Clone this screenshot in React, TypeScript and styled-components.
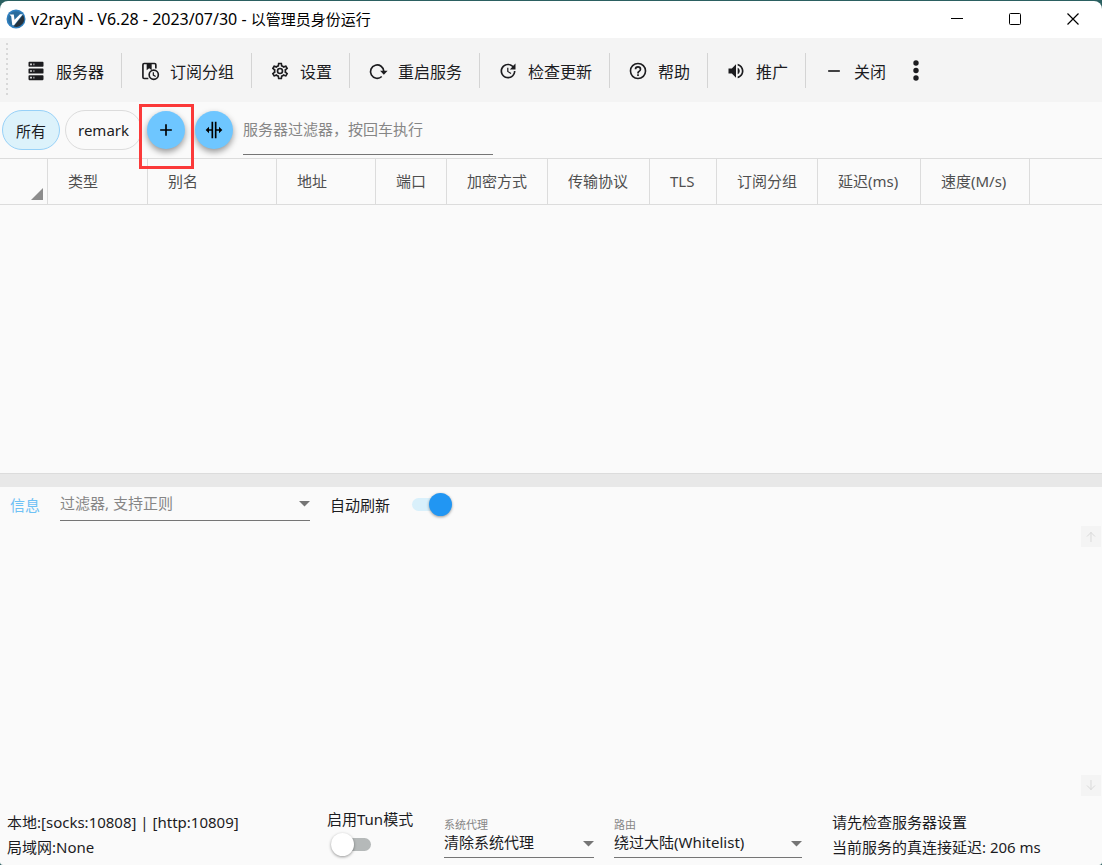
import React from "react";
import styled, { createGlobalStyle } from "styled-components";

const GlobalStyle = createGlobalStyle`
  *, *::before, *::after { box-sizing: border-box; }
  body {
    margin: 0;
    background: #2b6061;
    font-family: "Noto Sans", "Noto Sans CJK SC", sans-serif;
    font-size: 15px;
    color: #1c1c1f;
  }
  button, input, select { font: inherit; color: inherit; }
`;

const Window = styled.main`
  min-height: 100vh;
  display: flex;
  flex-direction: column;
  border-top: 1px solid #2b6061;
  background: #2b6061;
`;

const TitleBar = styled.header`
  height: 37px;
  display: flex;
  align-items: center;
  padding: 0 0 2px 6px;
  gap: 5px;
  background: #fff;
  border-radius: 8px 8px 0 0;
`;

const Title = styled.h1`
  flex: 1;
  margin: 0;
  font-size: 15px;
  line-height: 22px;
  font-weight: 400;
  color: #000;
`;

const Version = styled.span`
  font-size: 16px;
`;

const CaptionButtons = styled.div`
  display: flex;
`;

const CaptionButton = styled.button`
  width: 58px;
  height: 34px;
  padding: 0;
  border: 0;
  background: none;
  display: grid;
  place-items: center;
`;

const Toolbar = styled.nav`
  height: 64px;
  display: flex;
  align-items: center;
  padding-left: 6px;
  background: #f4f4f4;
`;

const Grip = styled.span`
  width: 2px;
  height: 54px;
  background: repeating-linear-gradient(#d8d8d8 0 2px, transparent 2px 5px);
`;

const ToolButton = styled.button<{ $last?: boolean }>`
  height: 35px;
  display: flex;
  align-items: center;
  gap: 10px;
  padding: 1px 17px 0 18px;
  border: 0;
  border-right: 1px solid ${(p) => (p.$last ? "transparent" : "#d4d4d4")};
  background: none;
  font-size: 16px;
  white-space: nowrap;
`;

const MoreButton = styled.button`
  width: 24px;
  height: 35px;
  padding: 2px 0 0;
  border: 0;
  background: none;
  display: grid;
  place-items: center;
`;

const Panel = styled.section`
  flex: 1 0 0;
  display: flex;
  flex-direction: column;
  background: #fafafa;
`;

const FilterRow = styled.div`
  height: 56px;
  display: flex;
  align-items: center;
  padding-left: 2px;
  background: #fafafa;
`;

const Chip = styled.button<{ $active?: boolean }>`
  min-width: 58px;
  height: 40px;
  padding: 0 12px;
  margin-right: 5px;
  border: 1px solid ${(p) => (p.$active ? "#97d1f8" : "#dcdcdc")};
  border-radius: 20px;
  background: ${(p) => (p.$active ? "#dcf2fb" : "transparent")};
  white-space: nowrap;
`;

const RoundButton = styled.button`
  width: 38px;
  height: 38px;
  padding: 0;
  margin-right: 10px;
  display: grid;
  place-items: center;
  border: 0;
  border-radius: 50%;
  background: #6ec6ff;
  color: #000;
  box-shadow: 0 3px 6px rgba(0, 0, 0, 0.4);
`;

const Highlighted = styled.div`
  position: relative;
  &::after {
    content: "";
    position: absolute;
    inset: -7px 1px -20px -8px;
    border: 3px solid #fb3939;
    pointer-events: none;
  }
`;

const SearchInput = styled.input`
  width: 250px;
  height: 50px;
  padding: 0 0 2px;
  border: 0;
  border-bottom: 1px solid #757575;
  border-radius: 0;
  background: none;
  outline: 0;
  &::placeholder { color: #868686; opacity: 1; }
`;

const Grid = styled.table`
  width: 100%;
  table-layout: fixed;
  border-collapse: separate;
  border-spacing: 0;
  th {
    height: 47px;
    padding: 0 0 2px 20px;
    border: solid #dcdcdc;
    border-width: 1px 1px 1px 0;
    text-align: left;
    font-weight: 400;
    color: #4f4f4f;
    white-space: nowrap;
  }
  th:first-child { padding: 0 4px 4px 0; vertical-align: bottom; text-align: right; }
  th:last-child { border-right: 0; }
  svg { display: inline-block; vertical-align: bottom; }
`;

const Splitter = styled.div`
  height: 14px;
  background: #e8e8e8;
  border-top: 1px solid #dcdcdc;
`;

const LogHeader = styled.div`
  height: 38px;
  display: flex;
  align-items: center;
  padding: 0 0 2px 10px;
  gap: 20px;
`;

const LogTitle = styled.h2`
  margin: 0;
  font-size: 15px;
  font-weight: 400;
  color: #6ec1f5;
`;

const Combo = styled.div<{ $width: number; $height: number; $raise?: number }>`
  width: ${(p) => p.$width}px;
  height: ${(p) => p.$height}px;
  padding-bottom: ${(p) => p.$raise ?? 0}px;
  display: grid;
  align-items: center;
  border-bottom: 1px solid #757575;
  & > * { grid-area: 1 / 1; }
  & > svg { justify-self: end; pointer-events: none; }
  input, select {
    width: 100%;
    height: 100%;
    min-width: 0;
    padding: 0 16px 2px 0;
    border: 0;
    background: none;
    outline: 0;
    appearance: none;
  }
  select { padding-bottom: 4px; }
  input::placeholder { color: #868686; opacity: 1; }
`;

const SwitchLabel = styled.label<{ $stacked?: boolean }>`
  display: flex;
  flex-direction: ${(p) => (p.$stacked ? "column" : "row")};
  align-items: ${(p) => (p.$stacked ? "flex-start" : "center")};
  gap: ${(p) => (p.$stacked ? "3px" : "18px")};
  line-height: 22px;
  white-space: nowrap;
`;

const Switch = styled.input`
  appearance: none;
  width: 40px;
  height: 23px;
  margin: 0 4px;
  display: grid;
  align-items: center;
  &::before, &::after {
    content: "";
    grid-area: 1 / 1;
  }
  &::before {
    height: 13px;
    border-radius: 7px;
    background: #b5b9b9;
  }
  &::after {
    width: 23px;
    height: 23px;
    border-radius: 50%;
    background: #fff;
    box-shadow: 0 1px 3px rgba(0, 0, 0, 0.4);
  }
  &:checked::before { background: #d9f0fb; }
  &:checked::after { justify-self: end; background: #2196f3; }
`;

const LogBody = styled.div`
  flex: 1;
  display: flex;
  flex-direction: column;
  align-items: flex-end;
  justify-content: space-between;
  padding: 1px 1px 5px 0;
`;

const ScrollButton = styled.button`
  width: 20px;
  height: 21px;
  padding: 0;
  border: 0;
  display: grid;
  place-items: center;
  background: #f4f4f4;
  color: #d9d9d9;
`;

const StatusBar = styled.footer`
  height: 64px;
  display: grid;
  grid-template-columns: 317px 120px 170px 218px 1fr;
  padding: 2px 0 0 7px;
  background: #fafafa;
  border-radius: 0 0 3px 3px;
`;

const StatusLines = styled.div`
  padding-top: 7px;
  line-height: 25px;
  white-space: nowrap;
`;

const SwitchCell = styled.div`
  padding: 5px 0 0 3px;
`;

const Field = styled.div`
  padding-top: 15px;
  label {
    display: block;
    font-size: 11px;
    line-height: 14px;
    color: #868686;
  }
`;

const mdi = {
  server:
    "M4,1H20A1,1 0 0,1 21,2V6A1,1 0 0,1 20,7H4A1,1 0 0,1 3,6V2A1,1 0 0,1 4,1M4,9H20A1,1 0 0,1 21,10V14A1,1 0 0,1 20,15H4A1,1 0 0,1 3,14V10A1,1 0 0,1 4,9M4,17H20A1,1 0 0,1 21,18V22A1,1 0 0,1 20,23H4A1,1 0 0,1 3,22V18A1,1 0 0,1 4,17M9,5H10V3H9V5M9,13H10V11H9V13M9,21H10V19H9V21M5,3V5H7V3H5M5,11V13H7V11H5M5,19V21H7V19H5Z",
  cog: "M12,8A4,4 0 0,1 16,12A4,4 0 0,1 12,16A4,4 0 0,1 8,12A4,4 0 0,1 12,8M12,10A2,2 0 0,0 10,12A2,2 0 0,0 12,14A2,2 0 0,0 14,12A2,2 0 0,0 12,10M10,22C9.75,22 9.54,21.82 9.5,21.58L9.13,18.93C8.5,18.68 7.96,18.34 7.44,17.94L4.95,18.95C4.73,19.03 4.46,18.95 4.34,18.73L2.34,15.27C2.21,15.05 2.27,14.78 2.46,14.63L4.57,12.97L4.5,12L4.57,11L2.46,9.37C2.27,9.22 2.21,8.95 2.34,8.73L4.34,5.27C4.46,5.05 4.73,4.96 4.95,5.05L7.44,6.05C7.96,5.66 8.5,5.32 9.13,5.07L9.5,2.42C9.54,2.18 9.75,2 10,2H14C14.25,2 14.46,2.18 14.5,2.42L14.87,5.07C15.5,5.32 16.04,5.66 16.56,6.05L19.05,5.05C19.27,4.96 19.54,5.05 19.66,5.27L21.66,8.73C21.79,8.95 21.73,9.22 21.54,9.37L19.43,11L19.5,12L19.43,13L21.54,14.63C21.73,14.78 21.79,15.05 21.66,15.27L19.66,18.73C19.54,18.95 19.27,19.04 19.05,18.95L16.56,17.95C16.04,18.34 15.5,18.68 14.87,18.93L14.5,21.58C14.46,21.82 14.25,22 14,22H10M11.25,4L10.88,6.61C9.68,6.86 8.62,7.5 7.85,8.39L5.44,7.35L4.69,8.65L6.8,10.2C6.4,11.37 6.4,12.64 6.8,13.8L4.68,15.36L5.43,16.66L7.86,15.62C8.63,16.5 9.68,17.14 10.87,17.38L11.24,20H12.76L13.13,17.39C14.32,17.14 15.37,16.5 16.14,15.62L18.57,16.66L19.32,15.36L17.2,13.81C17.6,12.64 17.6,11.37 17.2,10.2L19.31,8.65L18.56,7.35L16.15,8.39C15.38,7.5 14.32,6.86 13.12,6.62L12.75,4H11.25Z",
  update:
    "M21,10.12H14.22L16.96,7.3C14.23,4.6 9.81,4.5 7.08,7.2C4.35,9.91 4.35,14.28 7.08,17C9.81,19.7 14.23,19.7 16.96,17C18.32,15.65 19,14.08 19,12.1H21C21,14.08 20.12,16.65 18.36,18.39C14.85,21.87 9.15,21.87 5.64,18.39C2.14,14.92 2.11,9.28 5.62,5.81C9.13,2.34 14.76,2.34 18.27,5.81L21,3V10.12M12.5,8V12.25L16,14.33L15.28,15.54L11,13V8H12.5Z",
  help: "M11,18H13V16H11V18M12,2A10,10 0 0,0 2,12A10,10 0 0,0 12,22A10,10 0 0,0 22,12A10,10 0 0,0 12,2M12,20C7.59,20 4,16.41 4,12C4,7.59 7.59,4 12,4C16.41,4 20,7.59 20,12C20,16.41 16.41,20 12,20M12,6A4,4 0 0,0 8,10H10A2,2 0 0,1 12,8A2,2 0 0,1 14,10C14,12 11,11.75 11,15H13C13,12.75 16,12.5 16,10A4,4 0 0,0 12,6Z",
  volume:
    "M14,3.23V5.29C16.89,6.15 19,8.83 19,12C19,15.17 16.89,17.84 14,18.7V20.77C18,19.86 21,16.28 21,12C21,7.72 18,4.14 14,3.23M16.5,12C16.5,10.23 15.5,8.71 14,7.97V16C15.5,15.29 16.5,13.76 16.5,12M3,9V15H7L12,20V4L7,9H3Z",
  minus: "M19,13H5V11H19V13Z",
  plus: "M19,13H13V19H11V13H5V11H11V5H13V11H19V13Z",
  split:
    "M18,16V13H15V22H13V2H15V11H18V8L22,12L18,16M2,12L6,16V13H9V22H11V2H9V11H6V8L2,12Z",
};

const Icon = ({ path, size = 20 }: { path: string; size?: number }) => (
  <svg width={size} height={size} viewBox="0 0 24 24" fill="currentColor" aria-hidden="true">
    <path d={path} />
  </svg>
);

const BookClockIcon = () => (
  <svg width="20" height="20" viewBox="0 0 24 24" fill="none" stroke="currentColor" strokeWidth="2" aria-hidden="true">
    <path d="M10 21H5a1.5 1.5 0 0 1-1.5-1.5v-15A1.5 1.5 0 0 1 5 3h12.500a1.500 1.500 0 0 1 1.500 1.500V9" />
    <path d="M8 3h6v8l-3-2.200L8 11z" fill="currentColor" stroke="none" />
    <circle cx="16.500" cy="16.500" r="5.500" />
    <path d="M16 13.500v3.500l2.800 1.600" strokeWidth="1.500" />
  </svg>
);

const RestartIcon = () => (
  <svg width="20" height="20" viewBox="0 0 24 24" aria-hidden="true">
    <path d="M16.500 18.600A8 8 0 1 1 19 12.500" fill="none" stroke="currentColor" strokeWidth="2" />
    <path d="M14.500 11.800h9L19 16.500z" fill="currentColor" />
  </svg>
);

const Logo = () => (
  <svg width="20" height="20" viewBox="0 0 20 20" aria-hidden="true">
    <circle cx="10" cy="10" r="9.500" fill="#2f7fbf" />
    <circle cx="10" cy="10" r="7.800" fill="#2b6c9c" />
    <path d="M8 17L17 6a7.800 7.800 0 0 1-9 11.500z" fill="#26323c" />
    <path d="M3.500 5.500h4.300l.7 5.300L14 5.200h2.800L8 16.200H6.300L5.200 7.300z" fill="#fff" />
  </svg>
);

const Caret = () => (
  <svg width="11" height="6" viewBox="0 0 11 6" fill="#757575" aria-hidden="true">
    <path d="M0 0h11L5.500 5.500z" />
  </svg>
);

const tools = [
  { label: "服务器", icon: <Icon path={mdi.server} /> },
  { label: "订阅分组", icon: <BookClockIcon /> },
  { label: "设置", icon: <Icon path={mdi.cog} /> },
  { label: "重启服务", icon: <RestartIcon /> },
  { label: "检查更新", icon: <Icon path={mdi.update} /> },
  { label: "帮助", icon: <Icon path={mdi.help} /> },
  { label: "推广", icon: <Icon path={mdi.volume} /> },
  { label: "关闭", icon: <Icon path={mdi.minus} /> },
];

const columns = [
  { label: "类型", width: 100 },
  { label: "别名", width: 129 },
  { label: "地址", width: 99 },
  { label: "端口", width: 71 },
  { label: "加密方式", width: 101 },
  { label: "传输协议", width: 102 },
  { label: "TLS", width: 67 },
  { label: "订阅分组", width: 101 },
  { label: "延迟(ms)", width: 103 },
  { label: "速度(M/s)", width: 109 },
];

export default function App() {
  return (
    <>
      <GlobalStyle />
      <Window>
        <TitleBar>
          <Logo />
          <Title>
            <Version>v2rayN - V6.28 - 2023/07/30 - </Version>
            以管理员身份运行
          </Title>
          <CaptionButtons>
            <CaptionButton aria-label="最小化">
              <svg width="12" height="12" stroke="#000"><path d="M0 5.500h12" /></svg>
            </CaptionButton>
            <CaptionButton aria-label="最大化">
              <svg width="12" height="12" fill="none" stroke="#000"><rect x=".5" y=".5" width="11" height="11" rx="1" /></svg>
            </CaptionButton>
            <CaptionButton aria-label="关闭窗口">
              <svg width="12" height="12" stroke="#000" strokeWidth="1.200"><path d="M.5.500l11 11M11.500.5l-11 11" /></svg>
            </CaptionButton>
          </CaptionButtons>
        </TitleBar>

        <Toolbar>
          <Grip />
          {tools.map((t, i) => (
            <ToolButton key={t.label} $last={i === tools.length - 1}>
              {t.icon}
              {t.label}
            </ToolButton>
          ))}
          <MoreButton aria-label="更多">
            <svg width="6" height="22" fill="currentColor">
              <circle cx="3" cy="3" r="2.700" />
              <circle cx="3" cy="10.500" r="2.700" />
              <circle cx="3" cy="18" r="2.700" />
            </svg>
          </MoreButton>
        </Toolbar>

        <FilterRow>
          <Chip $active>所有</Chip>
          <Chip>remark</Chip>
          <Highlighted>
            <RoundButton aria-label="添加"><Icon path={mdi.plus} /></RoundButton>
          </Highlighted>
          <RoundButton aria-label="调整列宽"><Icon path={mdi.split} /></RoundButton>
          <SearchInput aria-label="服务器过滤器" placeholder="服务器过滤器，按回车执行" />
        </FilterRow>

        <Panel>
          <Grid>
            <colgroup>
              <col width={48} />
              {columns.map((c) => <col key={c.label} width={c.width} />)}
              <col />
            </colgroup>
            <thead>
              <tr>
                <th><svg width="12" height="12" fill="#8c8c8c"><path d="M12 0v12H0z" /></svg></th>
                {columns.map((c) => <th key={c.label} scope="col">{c.label}</th>)}
                <th />
              </tr>
            </thead>
          </Grid>
        </Panel>

        <Splitter role="separator" />

        <Panel>
          <LogHeader>
            <LogTitle>信息</LogTitle>
            <Combo $width={250} $height={32}>
              <input aria-label="信息过滤器" placeholder="过滤器, 支持正则" />
              <Caret />
            </Combo>
            <SwitchLabel>
              自动刷新
              <Switch type="checkbox" role="switch" defaultChecked />
            </SwitchLabel>
          </LogHeader>
          <LogBody>
            <ScrollButton aria-label="向上滚动">
              <svg width="10" height="11" fill="none" stroke="currentColor"><path d="M5 11V1M1 5.500L5 1.500l4 4" /></svg>
            </ScrollButton>
            <ScrollButton aria-label="向下滚动">
              <svg width="10" height="11" fill="none" stroke="currentColor"><path d="M5 0v10M1 5.500l4 4 4-4" /></svg>
            </ScrollButton>
          </LogBody>
        </Panel>

        <StatusBar>
          <StatusLines>
            <div>本地:[socks:10808] | [http:10809]</div>
            <div>局域网:None</div>
          </StatusLines>
          <SwitchCell>
            <SwitchLabel $stacked>
              启用Tun模式
              <Switch type="checkbox" role="switch" />
            </SwitchLabel>
          </SwitchCell>
          <Field>
            <label htmlFor="proxy">系统代理</label>
            <Combo $width={150} $height={26} $raise={4}>
              <select id="proxy"><option>清除系统代理</option></select>
              <Caret />
            </Combo>
          </Field>
          <Field>
            <label htmlFor="route">路由</label>
            <Combo $width={188} $height={26} $raise={4}>
              <select id="route"><option>绕过大陆(Whitelist)</option></select>
              <Caret />
            </Combo>
          </Field>
          <StatusLines>
            <div>请先检查服务器设置</div>
            <div>当前服务的真连接延迟: 206 ms</div>
          </StatusLines>
        </StatusBar>
      </Window>
    </>
  );
}
